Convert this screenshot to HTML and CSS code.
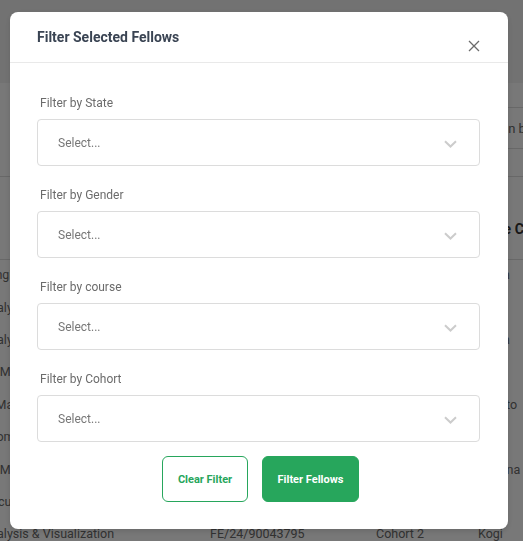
FILE: index.html
```html
<!DOCTYPE html>
<html>
<head>
<meta charset="utf-8">
<link rel="stylesheet" href="styles.css">
</head>
<body>
<div class="page">
  <div class="topbar"></div>
  <div class="toolbar">
    <div class="search">in batch</div>
  </div>
  <div class="section">
    <div class="grid head">
      <div>Course</div><div>Fellow ID</div><div>Cohort</div><div>State Chapter</div>
    </div>
    <div class="grid row"><div>Cloud Engineering</div><div>FE/24/90043711</div><div>Cohort 2</div><div>Abuja</div></div>
    <div class="grid row"><div>Data Analysis &amp; Visualization</div><div>FE/24/90043722</div><div>Cohort 2</div><div>Oyo</div></div>
    <div class="grid row"><div>Data Analysis &amp; Visualization</div><div>FE/24/90043733</div><div>Cohort 2</div><div>Abuja</div></div>
    <div class="grid row"><div>Product Management</div><div>FE/24/90043744</div><div>Cohort 2</div><div>Kano</div></div>
    <div class="grid row"><div>Project Management</div><div>FE/24/90043755</div><div>Cohort 2</div><div>Sokoto</div></div>
    <div class="grid row"><div>Cloud Computing</div><div>FE/24/90043766</div><div>Cohort 2</div><div>Ogun</div></div>
    <div class="grid row"><div>Product Management</div><div>FE/24/90043777</div><div>Cohort 2</div><div>Kaduna</div></div>
    <div class="grid row"><div>Cybersecurity</div><div>FE/24/90043788</div><div>Cohort 2</div><div>Edo</div></div>
    <div class="grid row"><div>Data Analysis &amp; Visualization</div><div>FE/24/90043795</div><div>Cohort 2</div><div>Kogi</div></div>
  </div>
</div>

<div class="overlay">
  <div class="modal">
    <div class="modal-header">
      <h2 class="modal-title">Filter Selected Fellows</h2>
      <button class="close" aria-label="Close">
        <svg width="12" height="12" viewBox="0 0 12 12"><path d="M1 1L11 11M11 1L1 11" stroke="#6b6b6b" stroke-width="1.3" fill="none"/></svg>
      </button>
    </div>
    <div class="modal-body">
      <div class="field">
        <label class="label">Filter by State</label>
        <div class="select"><span>Select...</span><svg class="chev" width="13" height="8" viewBox="0 0 13 8"><path d="M1 1.2L6.5 6.5L12 1.2" stroke="#cccccc" stroke-width="2" fill="none"/></svg></div>
      </div>
      <div class="field">
        <label class="label">Filter by Gender</label>
        <div class="select"><span>Select...</span><svg class="chev" width="13" height="8" viewBox="0 0 13 8"><path d="M1 1.2L6.5 6.5L12 1.2" stroke="#cccccc" stroke-width="2" fill="none"/></svg></div>
      </div>
      <div class="field">
        <label class="label">Filter by course</label>
        <div class="select"><span>Select...</span><svg class="chev" width="13" height="8" viewBox="0 0 13 8"><path d="M1 1.2L6.5 6.5L12 1.2" stroke="#cccccc" stroke-width="2" fill="none"/></svg></div>
      </div>
      <div class="field field-last">
        <label class="label">Filter by Cohort</label>
        <div class="select"><span>Select...</span><svg class="chev" width="13" height="8" viewBox="0 0 13 8"><path d="M1 1.2L6.5 6.5L12 1.2" stroke="#cccccc" stroke-width="2" fill="none"/></svg></div>
      </div>
      <div class="actions">
        <button class="btn btn-outline">Clear Filter</button>
        <button class="btn btn-solid">Filter Fellows</button>
      </div>
    </div>
  </div>
</div>
</body>
</html>
```

FILE: styles.css
```css
html, body {
  margin: 0;
  padding: 0;
  overflow: hidden;
  height: 100%;
}
body {
  font-family: Roboto, "Liberation Sans", sans-serif;
  background: #ffffff;
}

/* background page */
.page {
  width: 523px;
  overflow: hidden;
}
.topbar {
  height: 83px;
  background: #f3f3f3;
}
.toolbar {
  height: 93px;
  padding-top: 24px;
  padding-left: 440px;
  box-sizing: border-box;
}
.search {
  width: 200px;
  height: 42px;
  border: 1px solid #dddddd;
  border-radius: 4px;
  box-sizing: border-box;
  padding-left: 64px;
  display: flex;
  align-items: center;
  font-size: 13px;
  color: #666666;
}
.section {
  border-top: 1px solid #dddddd;
}
.grid {
  display: grid;
  grid-template-columns: 257px 166px 102px 120px;
  margin-left: -47px;
  white-space: nowrap;
  font-size: 12.5px;
  color: #6a6a6a;
}
.head {
  height: 83px;
  align-items: end;
  padding-bottom: 22px;
  box-sizing: border-box;
  border-bottom: 1px solid #dddddd;
  font-weight: 700;
  font-size: 14px;
  color: #333333;
}
.row {
  height: 32.4px;
  align-items: center;
  padding-bottom: 3px;
  box-sizing: border-box;
}

/* overlay + modal */
.overlay {
  position: fixed;
  inset: 0;
  background: rgba(0, 0, 0, 0.53);
  display: flex;
  align-items: flex-start;
  padding: 12px 15px 0 10px;
  box-sizing: border-box;
}
.modal {
  width: 498px;
  background: #ffffff;
  border-radius: 8px;
  box-shadow: 0 2px 6px rgba(0, 0, 0, 0.15);
}
.modal-header {
  height: 51px;
  box-sizing: border-box;
  padding: 15px 28px 0 27px;
  display: flex;
  justify-content: space-between;
  align-items: flex-start;
  border-bottom: 1px solid #e9e9e9;
}
.modal-title {
  margin: 0;
  font-size: 14px;
  line-height: 20px;
  font-weight: 700;
  color: #3a4453;
}
.close {
  margin-top: 13px;
  padding: 0;
  border: 0;
  background: none;
  width: 12px;
  height: 12px;
  display: block;
}
.close svg {
  display: block;
}
.modal-body {
  padding: 32px 28px 27px 27px;
}
.field {
  margin-bottom: 21px;
}
.field-last {
  margin-bottom: 14px;
}
.label {
  display: block;
  padding-left: 3px;
  font-size: 12px;
  line-height: 16px;
  color: #6b6b6b;
  margin-bottom: 8px;
}
.select {
  height: 47px;
  box-sizing: border-box;
  border: 1px solid #dcdcdc;
  border-radius: 4px;
  display: flex;
  align-items: center;
  justify-content: space-between;
  padding: 0 22px 0 20px;
  font-size: 12px;
  color: #777777;
}
.chev {
  display: block;
  margin-top: 2px;
}
.actions {
  display: flex;
  justify-content: center;
  gap: 14px;
  padding-left: 4px;
}
.btn {
  height: 46px;
  box-sizing: border-box;
  border-radius: 6px;
  font-family: Roboto, "Liberation Sans", sans-serif;
  font-size: 11px;
  font-weight: 700;
  padding: 0 14px;
  cursor: pointer;
}
.btn-outline {
  width: 86px;
  background: #ffffff;
  border: 1px solid #27a65c;
  color: #27a65c;
}
.btn-solid {
  width: 97px;
  background: #27a65c;
  border: 1px solid #27a65c;
  color: #ffffff;
}
```
